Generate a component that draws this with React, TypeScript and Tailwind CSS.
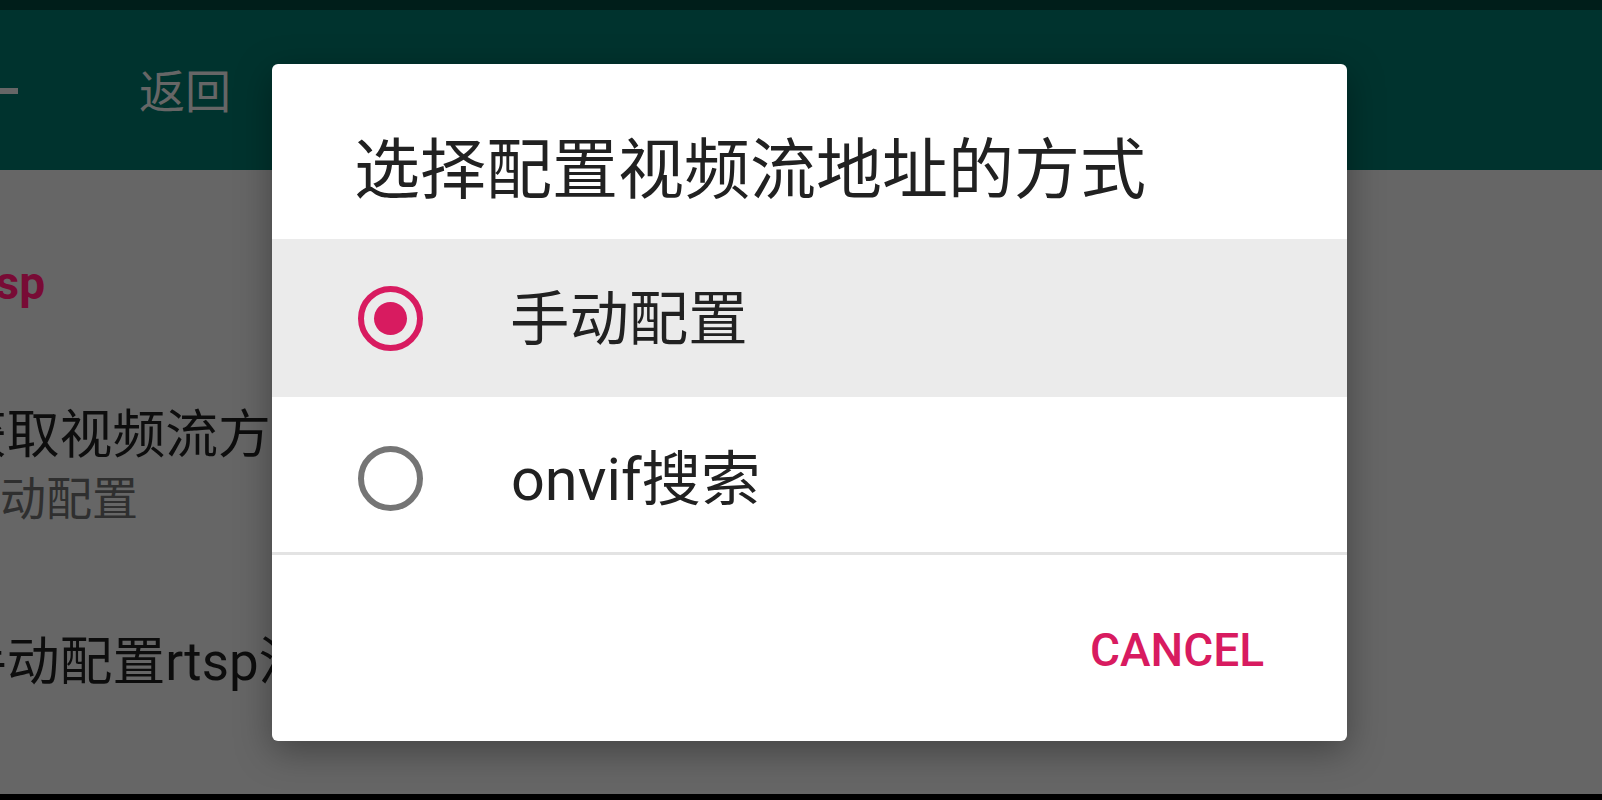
import React from "react";

const FONT = { fontFamily: 'Roboto, "Noto Sans CJK SC", sans-serif' };

function Radio({ checked }: { checked: boolean }) {
  return checked ? (
    <div className="w-[65px] h-[65px] rounded-full border-[6.5px] border-[#d81b60] flex items-center justify-center shrink-0">
      <div className="w-[33px] h-[33px] rounded-full bg-[#d81b60]" />
    </div>
  ) : (
    <div className="w-[65px] h-[65px] rounded-full border-[6.5px] border-[#757575] shrink-0" />
  );
}

export default function App() {
  return (
    <div className="relative w-[1602px] h-[800px] overflow-hidden flex flex-col bg-[#666666]" style={FONT}>
      {/* status bar */}
      <div className="h-[10px] bg-[#001e1a] shrink-0" />
      {/* toolbar */}
      <div className="h-[160px] bg-[#00332e] shrink-0 flex items-center">
        <div className="w-[18px] h-[6px] bg-[#666666] mt-[2px]" />
        <div className="ml-[121px] text-[46px] leading-[46px] text-[#666666] mt-[4px]">返回</div>
      </div>
      {/* content */}
      <div className="flex-1 flex flex-col bg-[#666666]">
        <div className="mt-[90px] ml-[-38px] text-[46px] leading-[46px] font-bold text-[#780b35] whitespace-nowrap">rtsp</div>
        <div className="mt-[103px] ml-[-46px] text-[52.8px] leading-[52px] text-[#0d0d0d] whitespace-nowrap">获取视频流方式</div>
        <div className="mt-[15px] ml-[-46px] text-[46px] leading-[46px] text-[#2f2f2f] whitespace-nowrap">手动配置</div>
        <div className="mt-[114px] ml-[-46px] text-[52.8px] leading-[52px] text-[#0d0d0d] whitespace-nowrap">手动配置rtsp流地址</div>
      </div>
      {/* nav bar strip */}
      <div className="h-[6px] bg-black shrink-0" />

      {/* dialog */}
      <div className="absolute left-[272px] top-[64px] w-[1075px] h-[677px] bg-white rounded-[6px] shadow-[0_10px_36px_rgba(0,0,0,0.35)] flex flex-col overflow-hidden">
        <div className="h-[175px] shrink-0 pl-[82px] pt-[74px]">
          <div className="text-[66px] leading-[66px] text-[#212121] whitespace-nowrap">选择配置视频流地址的方式</div>
        </div>
        <div className="h-[158px] shrink-0 bg-[#ebebeb] flex items-center pl-[86px]">
          <Radio checked />
          <div className="ml-[87px] mt-[4px] text-[59.4px] leading-[60px] text-[#212121] whitespace-nowrap">手动配置</div>
        </div>
        <div className="h-[155px] shrink-0 flex items-center pl-[86px] pt-[8px]">
          <Radio checked={false} />
          <div className="ml-[88px] mt-[2px] text-[59.4px] leading-[60px] text-[#212121] whitespace-nowrap">onvif搜索</div>
        </div>
        <div className="h-[3px] shrink-0 bg-[#e3e3e3]" />
        <div className="flex-1 flex items-center justify-end pr-[83px] pt-[4px]">
          <div className="text-[46px] leading-[46px] font-medium text-[#d81b60]">CANCEL</div>
        </div>
      </div>
    </div>
  );
}
